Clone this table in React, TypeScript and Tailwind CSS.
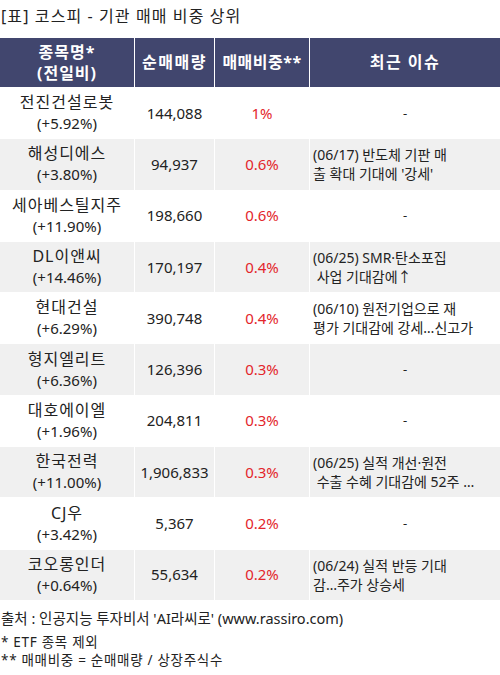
const rows = [
  { name: "전진건설로봇", chg: "(+5.92%)", vol: "144,088", ratio: "1%", issue: ["-"] },
  { name: "해성디에스", chg: "(+3.80%)", vol: "94,937", ratio: "0.6%", issue: ["(06/17) 반도체 기판 매", "출 확대 기대에 '강세'"] },
  { name: "세아베스틸지주", chg: "(+11.90%)", vol: "198,660", ratio: "0.6%", issue: ["-"] },
  { name: "DL이앤씨", chg: "(+14.46%)", vol: "170,197", ratio: "0.4%", issue: ["(06/25) SMR·탄소포집", " 사업 기대감에↑"] },
  { name: "현대건설", chg: "(+6.29%)", vol: "390,748", ratio: "0.4%", issue: ["(06/10) 원전기업으로 재", "평가 기대감에 강세…신고가"] },
  { name: "형지엘리트", chg: "(+6.36%)", vol: "126,396", ratio: "0.3%", issue: ["-"] },
  { name: "대호에이엘", chg: "(+1.96%)", vol: "204,811", ratio: "0.3%", issue: ["-"] },
  { name: "한국전력", chg: "(+11.00%)", vol: "1,906,833", ratio: "0.3%", issue: ["(06/25) 실적 개선·원전", " 수출 수혜 기대감에 52주 …"] },
  { name: "CJ우", chg: "(+3.42%)", vol: "5,367", ratio: "0.2%", issue: ["-"] },
  { name: "코오롱인더", chg: "(+0.64%)", vol: "55,634", ratio: "0.2%", issue: ["(06/24) 실적 반등 기대", "감…주가 상승세"] },
];

export default function App() {
  return (
    <div
      className="w-[500px] h-[675px] bg-white text-[#222] overflow-hidden"
      style={{ fontFamily: '"Noto Sans", "Noto Sans CJK KR", sans-serif' }}
    >
      <div className="pl-[1px] pt-[5px] h-[38px] text-[16px] leading-[22px] tracking-[1.1px]">
        [표] 코스피 - 기관 매매 비중 상위
      </div>

      <div className="flex h-[50px] bg-[#41466e] text-white font-bold text-[16px] leading-[21px] border-b border-white">
        <div className="w-[135px] flex flex-col items-center justify-center border-r border-white">
          <span className="tracking-[1px]">종목명*</span>
          <span className="tracking-[1px]">(전일비)</span>
        </div>
        <div className="w-[80px] flex items-center justify-center border-r border-white tracking-[1.5px]">순매매량</div>
        <div className="w-[95px] flex items-center justify-center border-r border-white tracking-[0.5px]">매매비중**</div>
        <div className="flex-1 flex items-center justify-center tracking-[1.5px]">최근 이슈</div>
      </div>

      {rows.map((r, i) => (
        <div
          key={r.name}
          className={
            "flex h-[51.3px] border-b border-white text-[15px] leading-[21px] " +
            (i % 2 === 1 ? "bg-[#f0f0f0]" : "bg-white")
          }
        >
          <div className="w-[135px] flex flex-col items-center justify-center border-r border-white">
            <span className="text-[16px] tracking-[1px]">{r.name}</span>
            <span>{r.chg}</span>
          </div>
          <div className="w-[80px] flex items-center justify-center border-r border-white">{r.vol}</div>
          <div className="w-[95px] flex items-center justify-center border-r border-white text-[#e3262b]">{r.ratio}</div>
          {r.issue.length === 1 ? (
            <div className="flex-1 flex items-center justify-center text-[13px]">-</div>
          ) : (
            <div className="flex-1 flex flex-col justify-center pl-[3px] text-[14px] leading-[19px] whitespace-pre">
              <span>{r.issue[0]}</span>
              <span>{r.issue[1]}</span>
            </div>
          )}
        </div>
      ))}

      <div className="pl-[1px] pt-[6px] text-[14.5px] leading-[22px]">
        출처 : 인공지능 투자비서 'AI라씨로' (www.rassiro.com)
      </div>
      <div className="pl-[1px] pt-[4px] text-[13.5px] leading-[18px] tracking-[0.7px]">
        <div>* ETF 종목 제외</div>
        <div>** 매매비중 = 순매매량 / 상장주식수</div>
      </div>
    </div>
  );
}
